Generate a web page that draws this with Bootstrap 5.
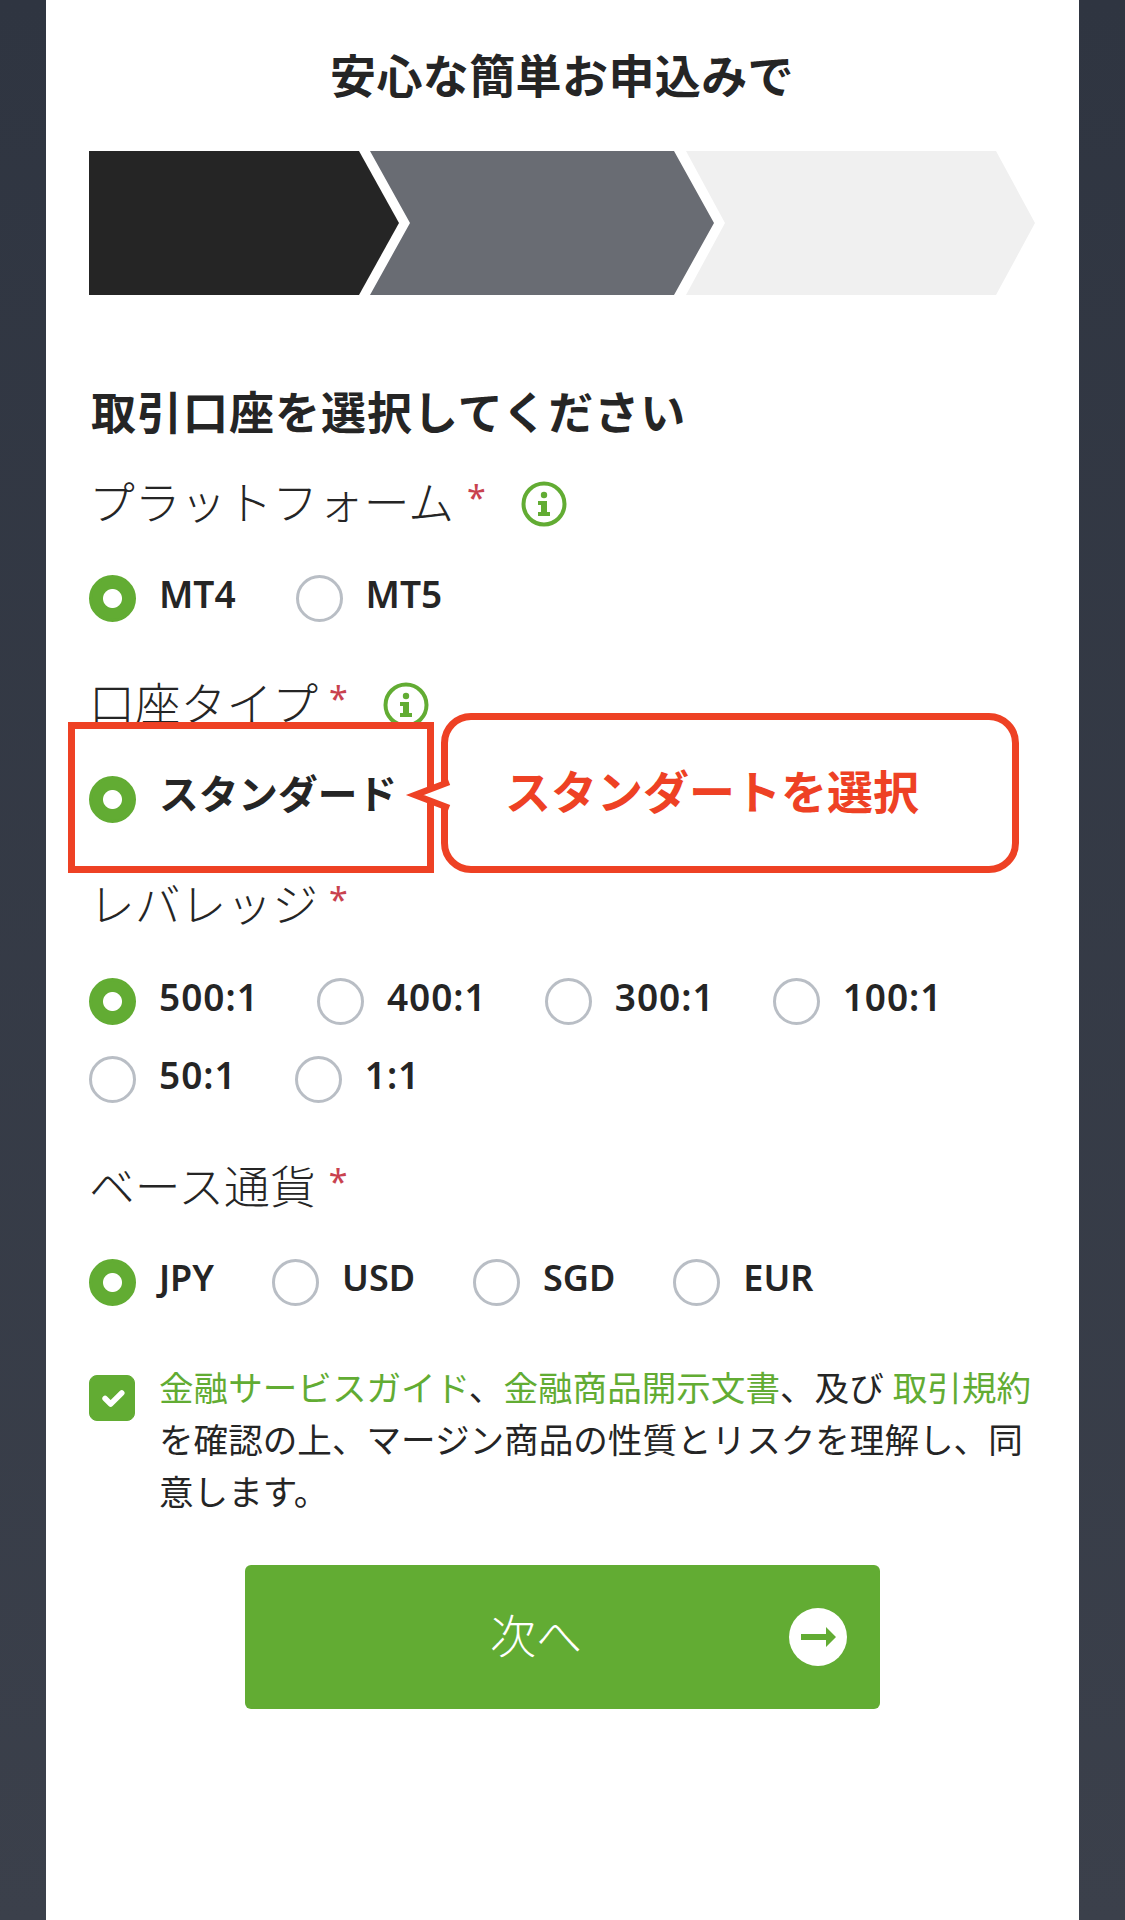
<!DOCTYPE html>
<html lang="ja">
<head>
  <meta charset="UTF-8">
  <meta name="viewport" content="width=device-width, initial-scale=1">
  <title>取引口座を選択</title>
  <link href="https://cdn.jsdelivr.net/npm/bootstrap@5.3.0/dist/css/bootstrap.min.css" rel="stylesheet">
  <style>
    body {
      background: linear-gradient(#2f3541, #3b404b);
      font-family: "Noto Sans", "Noto Sans CJK JP", sans-serif;
      color: #252525;
    }
    .sheet {
      position: relative;
      margin: 0 46px;
      height: 1920px;
      padding: 45px 44px 0 43px;
      background-color: #fff;
    }
    .sheet-title {
      margin: 0;
      font-size: 46px;
      line-height: 60px;
      font-weight: 700;
      letter-spacing: 0.4px;
      text-align: center;
    }
    .steps { display: block; margin-top: 46px; }
    .form-title {
      margin: 88px 0 0;
      font-size: 45px;
      line-height: 60px;
      font-weight: 700;
      letter-spacing: 1px;
      padding-left: 2px;
    }
    .field-label {
      display: flex;
      align-items: center;
      height: 60px;
      font-size: 45.8px;
      font-weight: 300;
      margin-top: 51px;
    }
    .field-label.first { margin-top: 29px; }
    .field-label.wide { margin-top: 53px; }
    .req { color: #c9424f; font-size: 34px; font-weight: 400; margin-left: 11px; position: relative; top: -5px; }
    .req.spaced { margin-left: 13px; }
    .info-icon { margin: 4px 0 0 35px; }
    .choices {
      display: flex;
      flex-wrap: wrap;
      column-gap: 60px;
      row-gap: 31px;
      margin-top: 43px;
    }
    .choices.digits { margin-top: 44px; letter-spacing: 1px; column-gap: 58px; }
    .choices.money { column-gap: 58px; }
    .choice {
      display: flex;
      align-items: center;
      gap: 23px;
      font-size: 37px;
      font-weight: 600;
    }
    .choice-text { line-height: 38px; padding-bottom: 9px; }
    .choices.money .choice { font-size: 36px; }
    .choice.strong { font-size: 39.7px; font-weight: 700; }
    .choice.strong .choice-text { line-height: 37px; padding-bottom: 10px; }
    .choice .form-check-input {
      width: 47px;
      height: 47px;
      margin: 0;
      flex-shrink: 0;
      border: 3px solid #b9bec5;
    }
    .choice .form-check-input:checked {
      border-color: #62ac33;
      background-color: #62ac33;
      background-image: radial-gradient(circle, #fff 9px, transparent 10px);
      background-size: auto;
    }
    .agree {
      display: flex;
      gap: 24px;
      margin-top: 56px;
      font-size: 34.6px;
      line-height: 52px;
    }
    .agree .form-check-input {
      width: 46px;
      height: 46px;
      margin: 13px 0 0;
      flex-shrink: 0;
      border-color: #62ac33;
      border-radius: 8px;
      background-color: #62ac33;
      background-size: 83%;
    }
    .agree a { color: #62ac33; text-decoration: none; }
    .next-btn {
      display: flex;
      align-items: center;
      width: 635px;
      height: 144px;
      margin: 47px auto 0;
      padding: 0 32px 0 38px;
      border-radius: 6px;
      background-color: #62ac33;
      color: #fff;
      font-size: 46px;
      font-weight: 300;
    }
    .next-btn:hover, .next-btn:active { background-color: #62ac33; color: #fff; }
    .next-label { flex-grow: 1; text-align: center; margin-bottom: 4px; }
    /* annotation laid over the form */
    .mark-box {
      position: absolute;
      left: 22px;
      top: 722px;
      width: 366px;
      height: 151px;
      border: 7px solid #ee4124;
    }
    .mark-note {
      position: absolute;
      left: 395px;
      top: 713px;
      width: 578px;
      height: 160px;
      display: flex;
      align-items: center;
      padding: 0 0 4px 57px;
      border: 7px solid #ee4124;
      border-radius: 30px;
      background-color: #fff;
      color: #ee4124;
      font-size: 46px;
      font-weight: 700;
    }
    .mark-tip { position: absolute; left: -47px; top: 55px; }
  </style>
</head>
<body>

<div class="sheet">
  <h1 class="sheet-title">安心な簡単お申込みで</h1>

  <!-- progress arrows -->
  <svg class="steps" width="946" height="144" viewBox="0 0 946 144">
    <polygon points="0,0 270,0 310,72 270,144 0,144" fill="#252525"/>
    <polygon points="281,0 585,0 625,72 585,144 281,144 321,72" fill="#696c73"/>
    <polygon points="597,0 907,0 946,72 907,144 597,144 636,72" fill="#f0f0f0"/>
  </svg>

  <h2 class="form-title">取引口座を選択してください</h2>

  <div class="field-label first">プラットフォーム<span class="req spaced">*</span><svg class="info-icon" width="46" height="46" viewBox="0 0 46 46"><circle cx="23" cy="23" r="20.5" fill="none" stroke="#62ac33" stroke-width="4"/><circle cx="23" cy="14" r="3.2" fill="#62ac33"/><path d="M17 20h9v11h3v4H17v-4h3v-7h-3z" fill="#62ac33"/></svg></div>
  <div class="choices">
    <label class="choice"><input class="form-check-input" type="radio" name="platform" checked><span class="choice-text">MT4</span></label>
    <label class="choice"><input class="form-check-input" type="radio" name="platform"><span class="choice-text">MT5</span></label>
  </div>

  <div class="field-label">口座タイプ<span class="req">*</span><svg class="info-icon" width="46" height="46" viewBox="0 0 46 46"><circle cx="23" cy="23" r="20.5" fill="none" stroke="#62ac33" stroke-width="4"/><circle cx="23" cy="14" r="3.2" fill="#62ac33"/><path d="M17 20h9v11h3v4H17v-4h3v-7h-3z" fill="#62ac33"/></svg></div>
  <div class="choices">
    <label class="choice strong"><input class="form-check-input" type="radio" name="type" checked><span class="choice-text">スタンダード</span></label>
  </div>

  <div class="field-label">レバレッジ<span class="req">*</span></div>
  <div class="choices digits">
    <label class="choice"><input class="form-check-input" type="radio" name="leverage" checked><span class="choice-text">500:1</span></label>
    <label class="choice"><input class="form-check-input" type="radio" name="leverage"><span class="choice-text">400:1</span></label>
    <label class="choice"><input class="form-check-input" type="radio" name="leverage"><span class="choice-text">300:1</span></label>
    <label class="choice"><input class="form-check-input" type="radio" name="leverage"><span class="choice-text">100:1</span></label>
    <label class="choice"><input class="form-check-input" type="radio" name="leverage"><span class="choice-text">50:1</span></label>
    <label class="choice"><input class="form-check-input" type="radio" name="leverage"><span class="choice-text">1:1</span></label>
  </div>

  <div class="field-label wide">ベース通貨<span class="req spaced">*</span></div>
  <div class="choices money">
    <label class="choice"><input class="form-check-input" type="radio" name="currency" checked><span class="choice-text">JPY</span></label>
    <label class="choice"><input class="form-check-input" type="radio" name="currency"><span class="choice-text">USD</span></label>
    <label class="choice"><input class="form-check-input" type="radio" name="currency"><span class="choice-text">SGD</span></label>
    <label class="choice"><input class="form-check-input" type="radio" name="currency"><span class="choice-text">EUR</span></label>
  </div>

  <div class="agree">
    <input class="form-check-input" type="checkbox" checked>
    <div><a href="#">金融サービスガイド</a>、<a href="#">金融商品開示文書</a>、及び <a href="#">取引規約</a>を確認の上、マージン商品の性質とリスクを理解し、同意します。</div>
  </div>

  <button type="button" class="btn next-btn">
    <span class="next-label">次へ</span>
    <svg width="58" height="58" viewBox="0 0 58 58"><circle cx="29" cy="29" r="29" fill="#fff"/><path d="M12 26h25v-7l10 10-10 10v-7H12z" fill="#62ac33"/></svg>
  </button>

  <!-- red annotation -->
  <div class="mark-box"></div>
  <div class="mark-note">
    <svg class="mark-tip" width="50" height="40" viewBox="0 0 50 40"><polygon points="50,6 14,20 50,34" fill="#fff"/><polyline points="48,7 14,20 48,33" fill="none" stroke="#ee4124" stroke-width="6.5"/></svg>
    スタンダートを選択
  </div>
</div>

<script src="https://cdn.jsdelivr.net/npm/bootstrap@5.3.0/dist/js/bootstrap.bundle.min.js"></script>
</body>
</html>
